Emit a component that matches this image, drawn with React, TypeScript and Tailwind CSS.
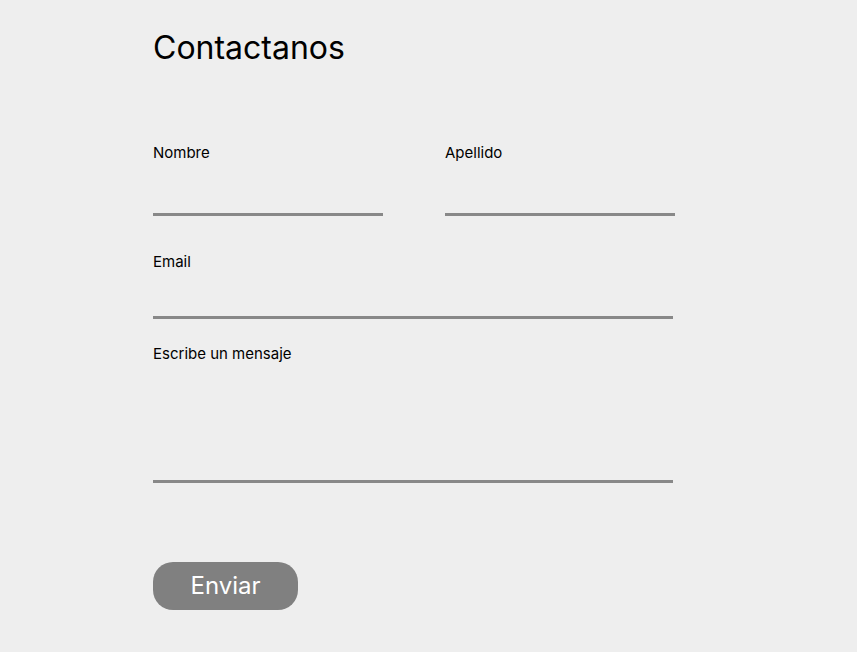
import React from 'react';

const Field: React.FC<{ label: string; inputClass: string; className?: string; textarea?: boolean }> = ({
  label,
  inputClass,
  className = '',
  textarea,
}) => {
  return (
    <label className={`flex flex-col ${className}`}>
      <span className="text-[15px] leading-[20px] text-black">{label}</span>
      {textarea ? (
        <textarea
          className={`resize-none bg-transparent outline-none border-b-[3px] border-[#888888] ${inputClass}`}
        />
      ) : (
        <input
          type="text"
          className={`bg-transparent outline-none border-b-[3px] border-[#888888] ${inputClass}`}
        />
      )}
    </label>
  );
};

const App: React.FC = () => {
  return (
    <main
      className="min-h-screen w-full bg-[#eeeeee] pl-[153px] pt-[28px]"
      style={{ fontFamily: 'Inter, "Noto Sans", sans-serif' }}
    >
      <h1 className="text-[32px] leading-[40px] text-black">Contactanos</h1>

      <form className="mt-[75px] flex w-[522px] flex-col">
        <div className="flex gap-[62px]">
          <Field label="Nombre" className="w-[230px]" inputClass="h-[53px]" />
          <Field label="Apellido" className="w-[230px]" inputClass="h-[53px]" />
        </div>
        <Field label="Email" className="mt-[36px] w-[520px]" inputClass="h-[47px]" />
        <Field label="Escribe un mensaje" className="mt-[25px] w-[520px]" inputClass="h-[119px]" textarea />

        <button
          type="button"
          className="mt-[79px] h-[48px] w-[145px] rounded-[20px] bg-[#808080] text-[24px] leading-none text-white"
        >
          Enviar
        </button>
      </form>
    </main>
  );
};

export default App;
